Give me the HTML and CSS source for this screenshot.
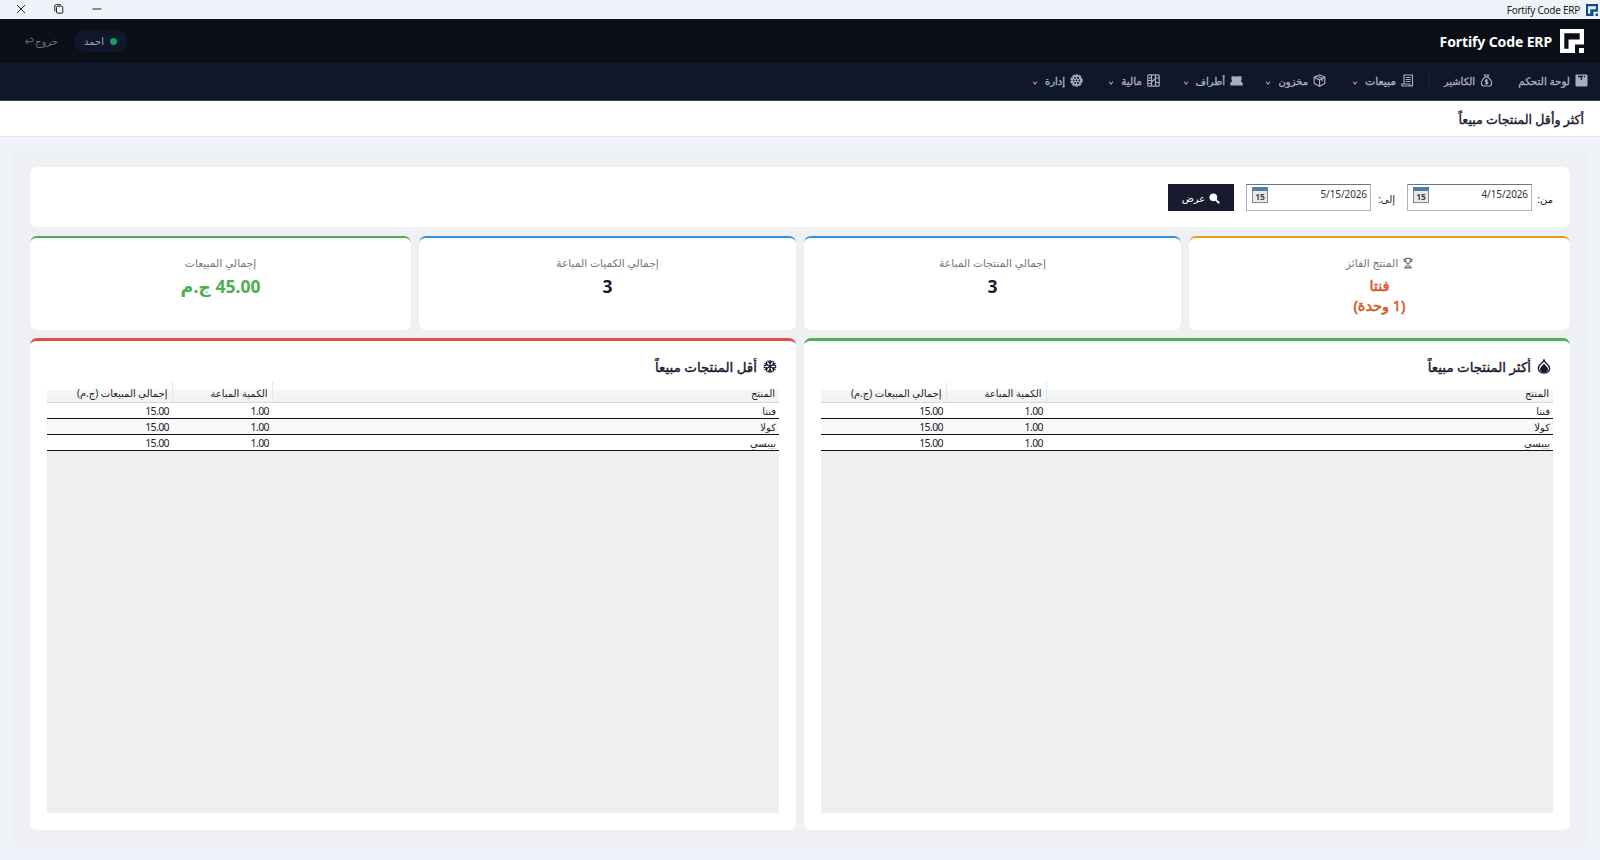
FILE: index.html
```html
<!DOCTYPE html>
<html lang="ar" dir="rtl">
<head>
	<meta charset="UTF-8">
	<title>Fortify Code ERP</title>
	<link rel="stylesheet" href="styles.css">
</head>
<body>
	<svg class="defs" width="0" height="0">
		<symbol id="logo" viewBox="0 0 24 24">
			<path d="M0 0h24v15.500h-9v8.500h-15zM4.300 4.300v15.400h4.200v-9.200h11.200v-6.200z" fill="currentColor" fill-rule="evenodd"/>
			<path d="M19 19h5v5h-5z" fill="currentColor"/>
		</symbol>
	</svg>

	<div class="titlebar">
		<div class="app-name">
			<svg class="logo-sm"><use href="#logo"/></svg>
			<span>Fortify Code ERP</span>
		</div>
		<div class="win-btns">
			<svg viewBox="0 0 10 10"><path d="M.5 5h9"/></svg>
			<svg viewBox="0 0 10 10"><rect x="2.5" y="2.2" width="6.3" height="7" rx="1.2"/><path d="M.8 7.5V2.2Q.8.7 2.2.7H7"/></svg>
			<svg viewBox="0 0 10 10"><path d="M1 1l8 8M9 1l-8 8"/></svg>
		</div>
	</div>

	<header class="header">
		<div class="brand">
			<svg class="logo"><use href="#logo"/></svg>
			<span>Fortify Code ERP</span>
		</div>
		<div class="account">
			<div class="user"><i class="dot"></i><span>احمد</span></div>
			<div class="logout">
				<span>خروج</span>
				<svg viewBox="0 0 10 8"><path d="M6 1.2h1.6q1.4 0 1.4 1.3v1q0 1.3-1.4 1.3H2M4 2.6L1.5 4.8 4 7"/></svg>
			</div>
		</div>
	</header>

	<nav class="nav">
		<a class="nav-item w-dash">
			<svg viewBox="0 0 13 13"><path fill="currentColor" fill-rule="evenodd" d="M1.500.500h10q1 0 1 1v9.500q0 1.500-1 1.500h-10q-1 0-1-1.500v-9.500q0-1 1-1zM3 1.700v1.600h2.700v2.700h1.200v-2.700h1v-1.600zM8.800 1.700v1.600h1.400v-1.600z"/></svg>
			<span>لوحة التحكم</span>
		</a>
		<a class="nav-item w-cash">
			<svg viewBox="0 0 13 13"><path d="M4.500 1h4l-.8 2.200h-2.400zM5.300 3.200q-3.900 2.500-3.900 6 0 2.800 2.700 2.800h4.800q2.700 0 2.700-2.800 0-3.500-3.900-6"/><path d="M7.800 6.300q-2.300-.8-2.500.6c0 1.300 2.600.6 2.600 1.900-.2 1.300-2 .9-2.800.4M6.500 5v5.700"/></svg>
			<span>الكاشير</span>
		</a>
		<i class="sep"></i>
		<a class="nav-item w-sales">
			<svg viewBox="0 0 13 13"><path d="M3 10V1h8.500v11H1.500q-1-.2-.8-2h8q0 2 1.500 2M4.700 3.500h5M4.700 5.500h5M4.700 7.500h5"/></svg>
			<span>مبيعات</span><b class="caret"></b>
		</a>
		<a class="nav-item w-stock">
			<svg viewBox="0 0 13 13"><path d="M6.500.8l5.300 2.400v6.300l-5.300 2.800-5.300-2.800V3.200zM1.200 3.400l5.300 2.500 5.300-2.500M6.500 5.900v6.200M3.700 2l5.400 2.500v2.800"/></svg>
			<span>مخزون</span><b class="caret"></b>
		</a>
		<a class="nav-item w-party">
			<svg viewBox="0 0 13 13"><path fill="currentColor" d="M1.500 2.300h4.300l.7.700.7-.7h4.300v3.700l-.7 1.200 1.900 1.500v2.700h-12.400v-2.700l1.900-1.500-.7-1.200z"/></svg>
			<span>أطراف</span><b class="caret"></b>
		</a>
		<a class="nav-item w-money">
			<svg viewBox="0 0 13 13"><rect x=".8" y=".8" width="11.400" height="11.400" rx="1"/><path d="M4.500 1v11M8.500 1v11M1 6.500h3.500M1 9.500h3M9 4h3M2 4.500l2.500-1.500M4.500 8l4-3.500M8.500 8.500h3.500"/></svg>
			<span>مالية</span><b class="caret"></b>
		</a>
		<a class="nav-item w-admin">
			<svg viewBox="0 0 13 13"><circle cx="6.500" cy="6.500" r="5.300" stroke-width="1.800" stroke-dasharray="2.600 .73"/><circle cx="6.500" cy="6.500" r="4.300"/><circle cx="6.500" cy="6.500" r="1.500"/><path d="M6.500 2v3M6.500 8v3M2.600 4.200l2.600 1.500M7.800 7.300l2.600 1.500M2.600 8.800l2.600-1.500M7.800 5.700l2.600-1.500"/></svg>
			<span>إدارة</span><b class="caret"></b>
		</a>
	</nav>

	<div class="page-title"><h1>أكثر وأقل المنتجات مبيعاً</h1></div>

	<main class="content">
		<section class="filter card">
			<label>من:</label>
			<div class="date"><span>4/15/2026</span><i class="cal">15</i></div>
			<label class="to">إلى:</label>
			<div class="date"><span>5/15/2026</span><i class="cal">15</i></div>
			<button type="button" class="show-btn">
				<svg viewBox="0 0 12 12"><circle cx="4.700" cy="4.700" r="4.200" fill="#fff"/><path d="M7.500 7.500l3 3" stroke="#fff" stroke-width="2.200" stroke-linecap="round"/></svg>
				<span>عرض</span>
			</button>
		</section>

		<section class="stats">
			<div class="stat card orange">
				<p>
					<svg viewBox="0 0 11 12"><path d="M3 1h5v3.200q0 2.300-2.500 2.300T3 4.200zM3 2H1q0 3 2.500 3M8 2h2q0 3-2.500 3M5.500 6.500v2.500M2.500 11q0-2 3-2t3 2zM1 11.300h9"/></svg>
					<span>المنتج الفائز</span>
				</p>
				<strong>فنتا<br>(1 وحدة)</strong>
			</div>
			<div class="stat card blue">
				<p><span>إجمالي المنتجات المباعة</span></p>
				<strong>3</strong>
			</div>
			<div class="stat card blue">
				<p><span>إجمالي الكميات المباعة</span></p>
				<strong>3</strong>
			</div>
			<div class="stat card green">
				<p><span>إجمالي المبيعات</span></p>
				<strong>45.00 ج.م</strong>
			</div>
		</section>

		<section class="panels">
			<div class="panel card green">
				<h2>
					<svg viewBox="0 0 14 16"><path d="M7 1q.6 2 2.800 3.800Q13 7.500 13 10.200 12.600 15 7 15T1 10.200Q1 7 4.200 4.800 6.500 3 7 1z" fill="none" stroke="currentColor" stroke-width="1.500"/><path d="M7 5l1.800 2Q11.300 9 11.300 11t-2 3H4.700Q2.700 13 2.700 11t2.500-4z" fill="currentColor"/></svg>
					<span>أكثر المنتجات مبيعاً</span>
				</h2>
				<div class="grid">
					<table>
						<tr><th>المنتج</th><th class="qty">الكمية المباعة</th><th class="total">إجمالي المبيعات (ج.م)</th></tr>
						<tr><td>فنتا</td><td class="num">1.00</td><td class="num">15.00</td></tr>
						<tr><td>كولا</td><td class="num">1.00</td><td class="num">15.00</td></tr>
						<tr><td>بيبسي</td><td class="num">1.00</td><td class="num">15.00</td></tr>
					</table>
				</div>
			</div>
			<div class="panel card red">
				<h2>
					<svg viewBox="0 0 14 14"><g fill="none" stroke="currentColor" stroke-width="1.300"><path d="M7 .5v13M1.400 3.700l11.200 6.600M1.400 10.300l11.200-6.600"/><path d="M4.500 1.200L7 3.500l2.500-2.300M4.500 12.800L7 10.500l2.500 2.300M.8 6.300l3.200-1-.7-3.300M13.200 6.300l-3.200-1 .7-3.300M.8 7.700l3.200 1-.7 3.300M13.200 7.700l-3.200 1 .7 3.300"/></g></svg>
					<span>أقل المنتجات مبيعاً</span>
				</h2>
				<div class="grid">
					<table>
						<tr><th>المنتج</th><th class="qty">الكمية المباعة</th><th class="total">إجمالي المبيعات (ج.م)</th></tr>
						<tr><td>فنتا</td><td class="num">1.00</td><td class="num">15.00</td></tr>
						<tr><td>كولا</td><td class="num">1.00</td><td class="num">15.00</td></tr>
						<tr><td>بيبسي</td><td class="num">1.00</td><td class="num">15.00</td></tr>
					</table>
				</div>
			</div>
		</section>
	</main>
</body>
</html>
```
FILE: styles.css
```css
*{
	box-sizing: border-box;
}
body{
	margin: 0;
	height: 860px;
	display: flex;
	flex-direction: column;
	overflow: hidden;
	background-color: #eff3f9;
	color: #1a1a2e;
	font-family: "Noto Sans", "DejaVu Sans", sans-serif;
	font-size: 10px;
}
h1, h2, p{
	margin: 0;
}
span{
	white-space: nowrap;
}
.defs{
	position: absolute;
}

/* window bar */
.titlebar{
	height: 19px;
	flex: none;
	display: flex;
	justify-content: space-between;
	background-color: #eef3fa;
	color: #1b1b1b;
}
.app-name{
	display: flex;
	align-items: center;
	gap: 6px;
	padding-right: 2px;
	font-size: 10px;
	letter-spacing: -.25px;
}
.logo-sm{
	width: 12px;
	height: 12px;
	color: #0c4f8c;
}
.win-btns{
	display: flex;
	gap: 28px;
	padding: 4px 0 0 16px;
}
.win-btns svg{
	width: 10px;
	height: 10px;
	fill: none;
	stroke: #222;
}

/* header */
.header{
	height: 44px;
	flex: none;
	display: flex;
	justify-content: space-between;
	align-items: center;
	padding: 0 16px 0 24px;
	background-color: #0b0f17;
}
.brand{
	display: flex;
	align-items: center;
	gap: 8px;
	color: #fff;
	font-size: 14px;
	font-weight: bold;
	letter-spacing: -.12px;
}
.logo{
	width: 24px;
	height: 24px;
}
.account{
	display: flex;
	align-items: center;
	gap: 16px;
}
.user{
	width: 53px;
	height: 22px;
	display: flex;
	align-items: center;
	gap: 6px;
	padding-right: 10px;
	border-radius: 11px;
	background-color: #0f172a;
	color: #94a3b8;
}
.dot{
	width: 7px;
	height: 7px;
	border-radius: 50%;
	background-color: #179c62;
}
.logout{
	display: flex;
	align-items: center;
	gap: 1px;
	color: #64748b;
}
.logout svg{
	width: 10px;
	height: 8px;
	fill: none;
	stroke: currentColor;
}

/* menu */
.nav{
	height: 38px;
	flex: none;
	display: flex;
	align-items: center;
	padding: 0 12px 2px 0;
	background-color: #0f172a;
	border-bottom: 1px solid #3b4350;
	color: #a3afc2;
}
.nav-item{
	display: flex;
	align-items: center;
	gap: 5px;
	flex: none;
	-webkit-text-stroke: .35px currentColor;
}
.nav-item svg{
	width: 13px;
	height: 13px;
	flex: none;
	fill: none;
	stroke: currentColor;
	stroke-width: 1.200;
}
.nav-item svg path[fill]{
	stroke: none;
}
.w-dash{
	width: 95px;
	font-size: 10.400px;
}
.w-cash{
	width: 63px;
}
.sep{
	width: 1px;
	height: 21px;
	margin-left: 15px;
	background-color: #1b2436;
}
.w-sales{
	width: 88px;
	font-size: 10.800px;
}
.w-stock,
.w-party{
	width: 83px;
}
.w-money{
	width: 77px;
	font-size: 10.500px;
}
.w-admin{
	width: 60px;
}
.caret{
	width: 4px;
	height: 4px;
	margin: 3px 3px 0 0;
	border: solid currentColor;
	border-width: 0 1.500px 1.500px 0;
	transform: scaleX(.8) rotate(45deg);
}

.page-title{
	height: 36px;
	flex: none;
	padding-right: 16px;
	background-color: #fff;
	border-bottom: 1px solid #e4e8ee;
}
.page-title h1{
	font-size: 12.600px;
	font-weight: normal;
	line-height: 38px;
	-webkit-text-stroke: .4px currentColor;
}

/* page */
.content{
	flex: 1;
	display: flex;
	flex-direction: column;
	gap: 8px;
	margin: 14px 12px 13px;
	padding: 16px 18px 17px;
	background-color: #eff0f4;
}
.card{
	background-color: #fff;
	border-radius: 7px;
}
.orange{
	border-top: 2px solid #f0981d;
}
.blue{
	border-top: 2px solid #2f92e0;
}
.green{
	border-top: 2px solid #54ab5b;
}
.red{
	border-top: 2px solid #dd5047;
}

.filter{
	height: 60px;
	flex: none;
	display: flex;
	align-items: center;
	padding-right: 17px;
}
.filter label{
	width: 21px;
	padding-top: 3px;
}
.filter .to{
	width: 24px;
	margin-right: 12px;
}
.date{
	width: 125px;
	height: 27px;
	display: flex;
	justify-content: space-between;
	padding: 2px 3px 0 5px;
	border: 1px solid #abb5c2;
	border-top-color: #65788a;
	color: #333;
}
.date span{
	font-size: 10px;
	line-height: 14px;
	letter-spacing: -.1px;
}
.cal{
	width: 16px;
	height: 16px;
	border: 1px solid #85878c;
	border-top: 4px solid #4f7ba6;
	background-color: #e8e9eb;
	color: #444;
	font-size: 8.500px;
	font-style: normal;
	font-weight: bold;
	line-height: 11px;
	text-align: center;
}
.show-btn{
	width: 66px;
	height: 27px;
	display: flex;
	align-items: center;
	justify-content: center;
	gap: 4px;
	margin-right: 12px;
	padding: 2px 0 0;
	border: 0;
	background-color: #1a1a2e;
	color: #fff;
	font: inherit;
}
.show-btn svg{
	width: 11px;
	height: 11px;
}

.stats{
	height: 94px;
	flex: none;
	display: grid;
	grid-template-columns: 381px 377px 377px 381px;
	gap: 8px;
	margin-top: 1px;
}
.stat{
	padding-top: 16px;
	text-align: center;
}
.stat p{
	height: 18px;
	display: flex;
	align-items: center;
	justify-content: center;
	gap: 5px;
	color: #777;
	font-size: 10.700px;
}
.stat p svg{
	width: 10px;
	height: 12px;
	fill: none;
	stroke: currentColor;
	stroke-width: 1.300;
}
.stat strong{
	display: block;
	font-size: 17.500px;
	line-height: 28px;
}
.stat.orange strong{
	color: #d9541e;
	font-size: 14.500px;
	font-weight: normal;
	line-height: 20px;
	padding-top: 3px;
	-webkit-text-stroke: .5px currentColor;
}
.stat.green strong{
	color: #4caf50;
}

.panels{
	flex: 1;
	display: grid;
	grid-template-columns: 1fr 1fr;
	gap: 8px;
}
.panels .card{
	border-top-width: 3px;
}
.panel{
	display: flex;
	flex-direction: column;
	padding: 12px 17px 17px;
}
.panel h2{
	height: 29px;
	flex: none;
	display: flex;
	align-items: center;
	gap: 6px;
	padding: 0 2px 2px 0;
	font-size: 13.400px;
	font-weight: normal;
	-webkit-text-stroke: .4px currentColor;
}
.panel h2 svg{
	width: 14px;
	height: 15px;
}
.grid{
	flex: 1;
	background-color: #efefef;
}
.grid table{
	width: 100%;
	table-layout: fixed;
	border-collapse: collapse;
	color: #222;
}
.grid th{
	height: 20px;
	padding: 3px 4px 0;
	border-left: 1px solid #e4e6e9;
	border-bottom: 1px solid #d5d7da;
	background: linear-gradient(#fff 40%, #f5f6f8 41%, #eff1f3);
	font-weight: normal;
	text-align: right;
	line-height: 14px;
	white-space: nowrap;
}
.grid .qty{
	width: 100px;
}
.grid .total{
	width: 125px;
	border-left: 0;
}
.grid td{
	height: 16px;
	padding: 2px 3px 0;
	border-bottom: 1px solid #111;
	background-color: #fff;
	line-height: 13px;
}
.grid tr:nth-child(odd) td{
	background-color: #f8f9fb;
}
.grid .num{
	font-size: 10.500px;
	letter-spacing: -.6px;
}
```
